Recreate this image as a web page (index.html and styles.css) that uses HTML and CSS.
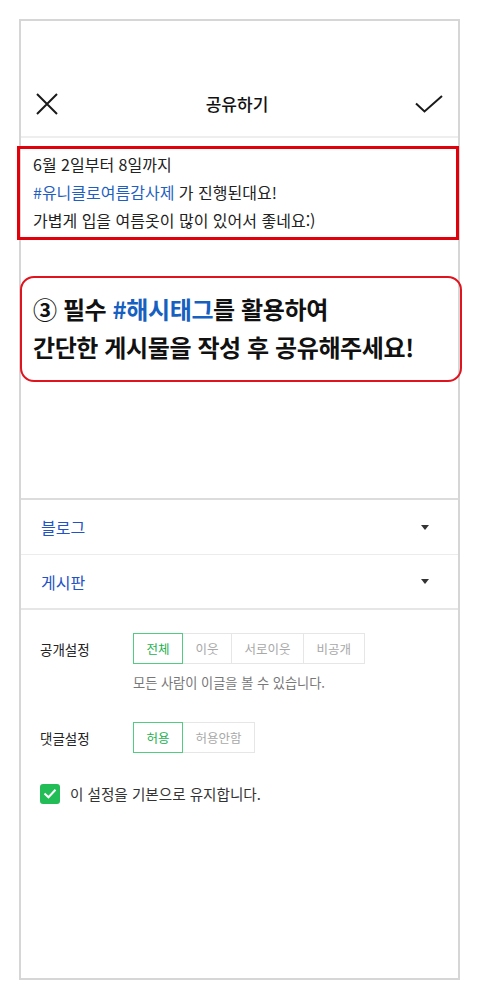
FILE: index.html
```html
<!DOCTYPE html>
<html lang="ko">
<head>
<meta charset="utf-8">
<title>공유하기</title>
<link rel="stylesheet" href="styles.css">
</head>
<body>
<div class="frame">
  <header class="topbar">
    <span class="icon close" aria-label="닫기">
      <svg width="24" height="22" viewBox="0 0 24 22"><path d="M2 1 L22 21 M22 1 L2 21" stroke="#1a1a1a" stroke-width="2" fill="none"/></svg>
    </span>
    <h1 class="title">공유하기</h1>
    <span class="icon confirm" aria-label="확인">
      <svg width="28" height="18" viewBox="0 0 28 18"><path d="M1 8.5 L9.5 16.5 L27 1" stroke="#1a1a1a" stroke-width="2" fill="none"/></svg>
    </span>
  </header>

  <div class="post-text">
    <p>6월 2일부터 8일까지</p>
    <p><span class="tag">#유니클로여름감사제</span> 가 진행된대요!</p>
    <p>가볍게 입을 여름옷이 많이 있어서 좋네요:)</p>
  </div>

  <div class="guide">
    <p>③ 필수 <span class="tag">#해시태그</span>를 활용하여</p>
    <p>간단한 게시물을 작성 후 공유해주세요!</p>
  </div>

  <div class="selects">
    <div class="select-row"><span>블로그</span><i class="caret"></i></div>
    <div class="select-row"><span>게시판</span><i class="caret"></i></div>
  </div>

  <section class="settings">
    <div class="setting">
      <div class="label">공개설정</div>
      <div class="seg">
        <span class="opt on">전체</span><span class="opt">이웃</span><span class="opt">서로이웃</span><span class="opt">비공개</span>
      </div>
    </div>
    <p class="hint">모든 사람이 이글을 볼 수 있습니다.</p>
    <div class="setting second">
      <div class="label">댓글설정</div>
      <div class="seg">
        <span class="opt on">허용</span><span class="opt">허용안함</span>
      </div>
    </div>
    <label class="keep">
      <span class="box">
        <svg width="14" height="11" viewBox="0 0 14 11"><path d="M1.5 5.5 L5.5 9.3 L12.5 1.8" stroke="#fff" stroke-width="2" fill="none"/></svg>
      </span>
      <span>이 설정을 기본으로 유지합니다.</span>
    </label>
  </section>
</div>
</body>
</html>
```

FILE: styles.css
```css
* { box-sizing: border-box; }

body {
  margin: 0;
  background: #fff;
  font-family: "Noto Sans CJK KR", "Noto Sans", sans-serif;
  color: #222;
}

p { margin: 0; }

.frame {
  margin: 19px 0 0 19px;
  width: 441px;
  height: 961px;
  border: 2px solid #d6d6d6;
  display: flex;
  flex-direction: column;
}

.topbar {
  height: 117px;
  padding: 50px 15px 0 14px;
  border-bottom: 2px solid #eeeeee;
  display: flex;
  align-items: center;
  justify-content: space-between;
}

.icon { display: flex; align-items: center; }

.title {
  margin: 0;
  font-size: 17px;
  font-weight: 500;
  color: #111;
}

.post-text {
  margin: 8px 0 0 -4px;
  width: 442px;
  border: 3px solid #e2000b;
  padding: 1px 13px 3px;
  font-size: 16px;
  line-height: 28px;
  color: #222;
}

.tag { color: #1f5fc2; }

.guide {
  margin: 36px 0 0 -1px;
  width: 442px;
  border: 2px solid #e0141e;
  border-radius: 14px;
  padding: 12px 10px 14px 11px;
  font-size: 24px;
  font-weight: 700;
  line-height: 38px;
  letter-spacing: -0.4px;
  color: #111;
}

.guide .tag { color: #1560c0; }

.selects {
  margin-top: 116px;
  border-top: 2px solid #dcdcdc;
  border-bottom: 2px solid #e6e6e6;
}

.select-row {
  height: 54px;
  padding: 0 29px 0 20px;
  display: flex;
  align-items: center;
  justify-content: space-between;
  font-size: 16px;
  color: #2452c6;
}

.select-row + .select-row { border-top: 1px solid #ececec; }

.caret {
  width: 0;
  height: 0;
  border-left: 4px solid transparent;
  border-right: 4px solid transparent;
  border-top: 5px solid #333;
}

.settings {
  padding: 23px 0 0 19px;
}

.setting {
  display: flex;
  align-items: center;
}

.setting.second { margin-top: 29px; }

.label {
  width: 93px;
  font-size: 13.5px;
  color: #222;
}

.seg { display: flex; }

.opt {
  height: 31px;
  padding: 0 12.5px;
  border: 1px solid #e6e6e6;
  display: flex;
  align-items: center;
  font-size: 12.5px;
  color: #a8a8a8;
}

.opt + .opt { border-left: none; }

.opt.on {
  border: 1.5px solid #52cc82;
  color: #19b04f;
}

.opt.on + .opt { border-left: none; }

.hint {
  margin: 9px 0 0 93px;
  font-size: 13.2px;
  line-height: 20px;
  color: #777;
}

.keep {
  margin-top: 30px;
  display: flex;
  align-items: center;
  gap: 10px;
  font-size: 14.6px;
  color: #333;
}

.box {
  width: 20px;
  height: 20px;
  border-radius: 3px;
  background: #22bd56;
  display: flex;
  align-items: center;
  justify-content: center;
}
```
